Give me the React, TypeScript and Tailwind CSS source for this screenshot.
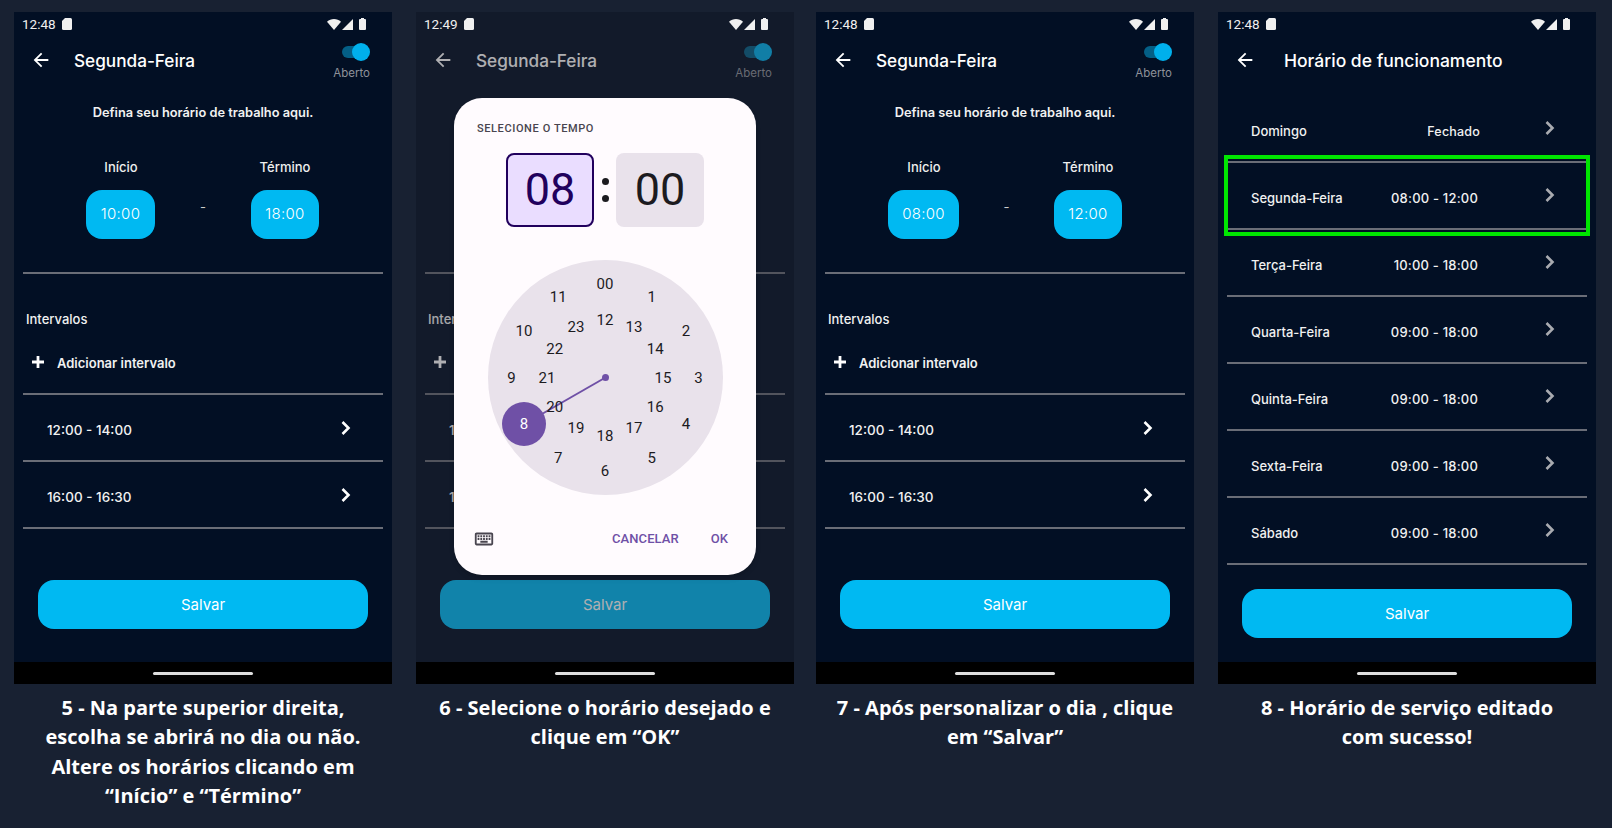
import { ReactNode } from 'react';

function Back() {
  return (
    <svg width="22" height="22" viewBox="0 0 24 24" fill="currentColor" className="text-white">
      <path d="M20 11H7.83l5.59-5.59L12 4l-8 8 8 8 1.41-1.41L7.83 13H20v-2z" />
    </svg>
  );
}

function Chevron({ className }: { className: string }) {
  return (
    <svg width="12" height="16" viewBox="0 0 12 16" fill="none" stroke="currentColor" strokeWidth="2.6" className={className}>
      <path d="M2.5 2l6 6-6 6" />
    </svg>
  );
}

function StatusBar({ time }: { time: string }) {
  return (
    <div className="relative z-10 h-[24px] flex items-center pl-[8px] pr-[26px] text-[#f0f0f0]">
      <span className="text-[13.5px] font-['Roboto',sans-serif] w-[40px]">{time}</span>
      <svg width="10" height="12" viewBox="0 0 10 12" fill="currentColor">
        <path d="M3 0h5.5A1.5 1.5 0 0 1 10 1.500v9A1.500 1.500 0 0 1 8.500 12h-7A1.500 1.500 0 0 1 0 10.500V3z" />
      </svg>
      <div className="ml-auto flex items-center">
        <svg width="14" height="11" viewBox="0 0 14 11" fill="currentColor">
          <path d="M7 11L0 2.800C2 1 4.400 0 7 0s5 1 7 2.800z" />
        </svg>
        <svg width="11" height="11" viewBox="0 0 11 11" fill="currentColor" className="ml-[1px]">
          <path d="M11 0v11H0z" />
        </svg>
        <svg width="7" height="12" viewBox="0 0 7 12" fill="currentColor" className="ml-[6px]">
          <path d="M2 0h3v1h1a1 1 0 0 1 1 1v9a1 1 0 0 1-1 1H1a1 1 0 0 1-1-1V2a1 1 0 0 1 1-1h1z" />
        </svg>
      </div>
    </div>
  );
}

function Divider() {
  return <div className="h-[2px] mx-[9px] bg-[#6a6d77]" />;
}

function SaveButton({ className }: { className: string }) {
  return (
    <div className={`mx-[24px] h-[49px] pt-[2px] rounded-[16px] bg-[#00b9f2] flex items-center justify-center text-white text-[15px] font-['Inter',sans-serif] mt-auto ${className}`}>
      Salvar
    </div>
  );
}

function Phone({ children }: { children: ReactNode }) {
  return (
    <div className="relative w-[378px] h-[672px] bg-[#020f24] flex flex-col overflow-hidden font-['Inter',sans-serif] text-white">
      {children}
      <div className="relative z-10 h-[22px] shrink-0 bg-black flex items-center justify-center">
        <div className="w-[100px] h-[3px] rounded-full bg-[#dedede]" />
      </div>
    </div>
  );
}

function Editor({ time, start, end, startW, dashW }: { time: string; start: string; end: string; startW: string; dashW: string }) {
  return (
    <>
      <StatusBar time={time} />
      <div className="h-[51px] flex items-start pl-[16px] pr-[22px] pt-[13px]">
        <Back />
        <span className="ml-[22px] text-[17.2px] font-medium leading-[24px]">Segunda-Feira</span>
        <div className="ml-auto -mt-[6px] flex flex-col items-end">
          <div className="relative w-[28px] h-[18px]">
            <div className="absolute left-0 top-[3px] w-[24px] h-[12px] rounded-full bg-[#045f86]" />
            <div className="absolute right-0 top-0 w-[18px] h-[18px] rounded-full bg-[#00b0ec]" />
          </div>
          <span className="text-[11.5px] leading-[16px] mt-[4px] text-[#8f929a]">Aberto</span>
        </div>
      </div>
      <p className="mt-[16px] h-[20px] text-center text-[12.8px] font-semibold leading-[20px] text-[#f1f1f1]">
        Defina seu horário de trabalho aqui.
      </p>
      <div className="mt-[34px] flex items-start pl-[72px]">
        <div className={`${startW} flex flex-col items-center`}>
          <span className="ml-[1px] text-[13px] font-medium leading-[20px] text-[#eeeeee]">Início</span>
          <div className="mt-[13px] w-full h-[49px] rounded-[16px] bg-[#00b9f2] flex items-center justify-center text-[15px] font-light tracking-[0.3px]">{start}</div>
        </div>
        <span className={`${dashW} mt-[40px] text-[13px] leading-[20px] text-[#cccccc] text-center`}>-</span>
        <div className="w-[68px] flex flex-col items-center">
          <span className="text-[13px] font-medium leading-[20px] text-[#eeeeee]">Término</span>
          <div className="mt-[13px] w-full h-[49px] rounded-[16px] bg-[#00b9f2] flex items-center justify-center text-[15px] font-light tracking-[0.3px]">{end}</div>
        </div>
      </div>
      <div className="mt-[33px]"><Divider /></div>
      <p className="mt-[35px] pl-[12px] text-[13px] font-medium leading-[20px] text-[#f1f1f1]">Intervalos</p>
      <div className="h-[64px] flex items-center pl-[18px] pt-[5px]">
        <svg width="12" height="12" viewBox="0 0 13 13" fill="white" className="-mt-[3px]">
          <path d="M5 0h3v5h5v3H8v5H5V8H0V5h5z" />
        </svg>
        <span className="ml-[13px] text-[13px] font-semibold text-[#f1f1f1]">Adicionar intervalo</span>
      </div>
      <Divider />
      {['12:00 - 14:00', '16:00 - 16:30'].map((range) => (
        <div key={range}>
          <div className="h-[65px] flex items-center pl-[33px] pr-[40px] pt-[6px]">
            <span className="text-[13.5px] font-medium text-[#f1f1f1]">{range}</span>
            <Chevron className="ml-auto -mt-[5px] text-white" />
          </div>
          <Divider />
        </div>
      ))}
      <SaveButton className="mb-[33px]" />
    </>
  );
}

const days = [
  ['Domingo', 'Fechado'],
  ['Segunda-Feira', '08:00 - 12:00'],
  ['Terça-Feira', '10:00 - 18:00'],
  ['Quarta-Feira', '09:00 - 18:00'],
  ['Quinta-Feira', '09:00 - 18:00'],
  ['Sexta-Feira', '09:00 - 18:00'],
  ['Sábado', '09:00 - 18:00'],
];

function Schedule() {
  return (
    <>
      <StatusBar time="12:48" />
      <div className="h-[51px] flex items-start pl-[16px] pt-[13px]">
        <Back />
        <span className="ml-[28px] text-[17.5px] font-medium leading-[24px]">Horário de funcionamento</span>
      </div>
      <div className="mt-[9px]">
        {days.map(([day, hours]) => (
          <div key={day}>
            <div className="h-[65px] flex items-center pl-[33px] pt-[7px] pr-[40px] text-[13px] font-medium text-[#f1f1f1]">
              <span className="w-[107px]">{day}</span>
              <span className={`w-[120px] text-right tracking-[0.2px] ${hours === 'Fechado' ? 'text-[12.5px] translate-x-[2px]' : ''}`}>{hours}</span>
              <Chevron className="ml-auto -mt-[8px] text-[#a9abb0]" />
            </div>
            <Divider />
          </div>
        ))}
      </div>
      <SaveButton className="mb-[24px]" />
      <div className="absolute left-[6px] top-[143px] w-[366px] h-[81px] border-[4px] border-[#00e600]" />
    </>
  );
}

const ringItems = [
  ...['00', '1', '2', '3', '4', '5', '6', '7', '8', '9', '10', '11'].map((label, i) => ({ label, angle: i * 30, radius: 93.5 })),
  ...['12', '13', '14', '15', '16', '17', '18', '19', '20', '21', '22', '23'].map((label, i) => ({ label, angle: i * 30, radius: 58 })),
];

function Clock() {
  return (
    <div className="relative w-[235px] h-[235px] rounded-full bg-[#e9e2eb] self-center text-[#1c1b1f] text-[15px]">
      <svg width="235" height="235" className="absolute inset-0 text-[#6f50a6]">
        <line x1="117.5" y1="117.5" x2="36.5" y2="164" stroke="currentColor" strokeWidth="2" />
        <circle cx="117.5" cy="117.5" r="3.5" fill="currentColor" />
        <circle cx="36" cy="164" r="22" fill="currentColor" />
      </svg>
      {ringItems.map(({ label, angle, radius }) => {
        const rad = (angle * Math.PI) / 180;
        const x = 117.5 + radius * Math.sin(rad);
        const y = 117.5 - radius * Math.cos(rad);
        return (
          <span
            key={label}
            className={`absolute -translate-x-1/2 -translate-y-1/2 leading-none ${label === '8' ? 'text-white' : ''}`}
            style={{ left: x, top: y }}
          >
            {label}
          </span>
        );
      })}
    </div>
  );
}

function TimeDialog() {
  return (
    <>
      <div className="absolute inset-x-0 top-0 bottom-[22px] bg-[#2e2e34]/[0.38]" />
      <div className="absolute left-[38px] top-[86px] w-[302px] h-[477px] rounded-[28px] bg-[#fffbfe] flex flex-col font-['Roboto',sans-serif] shadow-md">
        <p className="mt-[23px] ml-[23px] text-[11px] font-medium leading-[16px] tracking-[0.6px] text-[#49454f]">SELECIONE O TEMPO</p>
        <div className="mt-[16px] flex justify-center">
          <div className="w-[88px] h-[74px] rounded-[8px] border-2 border-[#21005d] bg-[#eaddff] flex items-center justify-center text-[45px] text-[#21005d]">08</div>
          <div className="w-[22px] flex flex-col items-center justify-center gap-[10px]">
            <div className="w-[7px] h-[7px] rounded-full bg-[#1c1b1f]" />
            <div className="w-[7px] h-[7px] rounded-full bg-[#1c1b1f]" />
          </div>
          <div className="w-[88px] h-[74px] rounded-[8px] bg-[#e9e2eb] flex items-center justify-center text-[45px] text-[#1c1b1f]">00</div>
        </div>
        <div className="mt-[33px] flex flex-col"><Clock /></div>
        <div className="mt-auto mb-[25px] flex items-center pl-[19px] pr-[28px]">
          <svg width="22" height="22" viewBox="0 0 24 24" fill="#49454f">
            <path d="M20 7v10H4V7h16m0-2H4c-1.100 0-1.990.9-1.990 2L2 17c0 1.100.9 2 2 2h16c1.100 0 2-.9 2-2V7c0-1.100-.9-2-2-2zm-9 3h2v2h-2zm0 3h2v2h-2zM8 8h2v2H8zm0 3h2v2H8zm-3 0h2v2H5zm0-3h2v2H5zm3 6h8v2H8zm6-3h2v2h-2zm0-3h2v2h-2zm3 3h2v2h-2zm0-3h2v2h-2z" />
          </svg>
          <span className="ml-auto text-[13px] font-medium tracking-[0.1px] text-[#6f50a6]">CANCELAR</span>
          <span className="ml-[32px] text-[13px] font-medium text-[#6f50a6]">OK</span>
        </div>
      </div>
    </>
  );
}

function Column({ className, caption, children }: { className: string; caption: string[]; children: ReactNode }) {
  return (
    <div className={`w-[378px] shrink-0 ${className}`}>
      <Phone>{children}</Phone>
      <div className="pt-[9px] text-center text-white text-[20px] leading-[29.3px] font-bold font-['Open_Sans',sans-serif]">
        {caption.map((line) => (
          <p key={line}>{line}</p>
        ))}
      </div>
    </div>
  );
}

export default function App() {
  return (
    <div className="w-[1612px] h-[828px] bg-[#182132] flex pt-[12px] overflow-hidden">
      <Column className="ml-[14px]" caption={['5 - Na parte superior direita,', 'escolha se abrirá no dia ou não.', 'Altere os horários clicando em', '“Início” e “Término”']}>
        <Editor time="12:48" start="10:00" end="18:00" startW="w-[69px]" dashW="w-[96px]" />
      </Column>
      <Column className="ml-[24px]" caption={['6 - Selecione o horário desejado e', 'clique em “OK”']}>
        <Editor time="12:49" start="10:00" end="18:00" startW="w-[69px]" dashW="w-[96px]" />
        <TimeDialog />
      </Column>
      <Column className="ml-[22px]" caption={['7 - Após personalizar o dia , clique', 'em “Salvar”']}>
        <Editor time="12:48" start="08:00" end="12:00" startW="w-[71px]" dashW="w-[95px]" />
      </Column>
      <Column className="ml-[24px]" caption={['8 - Horário de serviço editado', 'com sucesso!']}>
        <Schedule />
      </Column>
    </div>
  );
}
